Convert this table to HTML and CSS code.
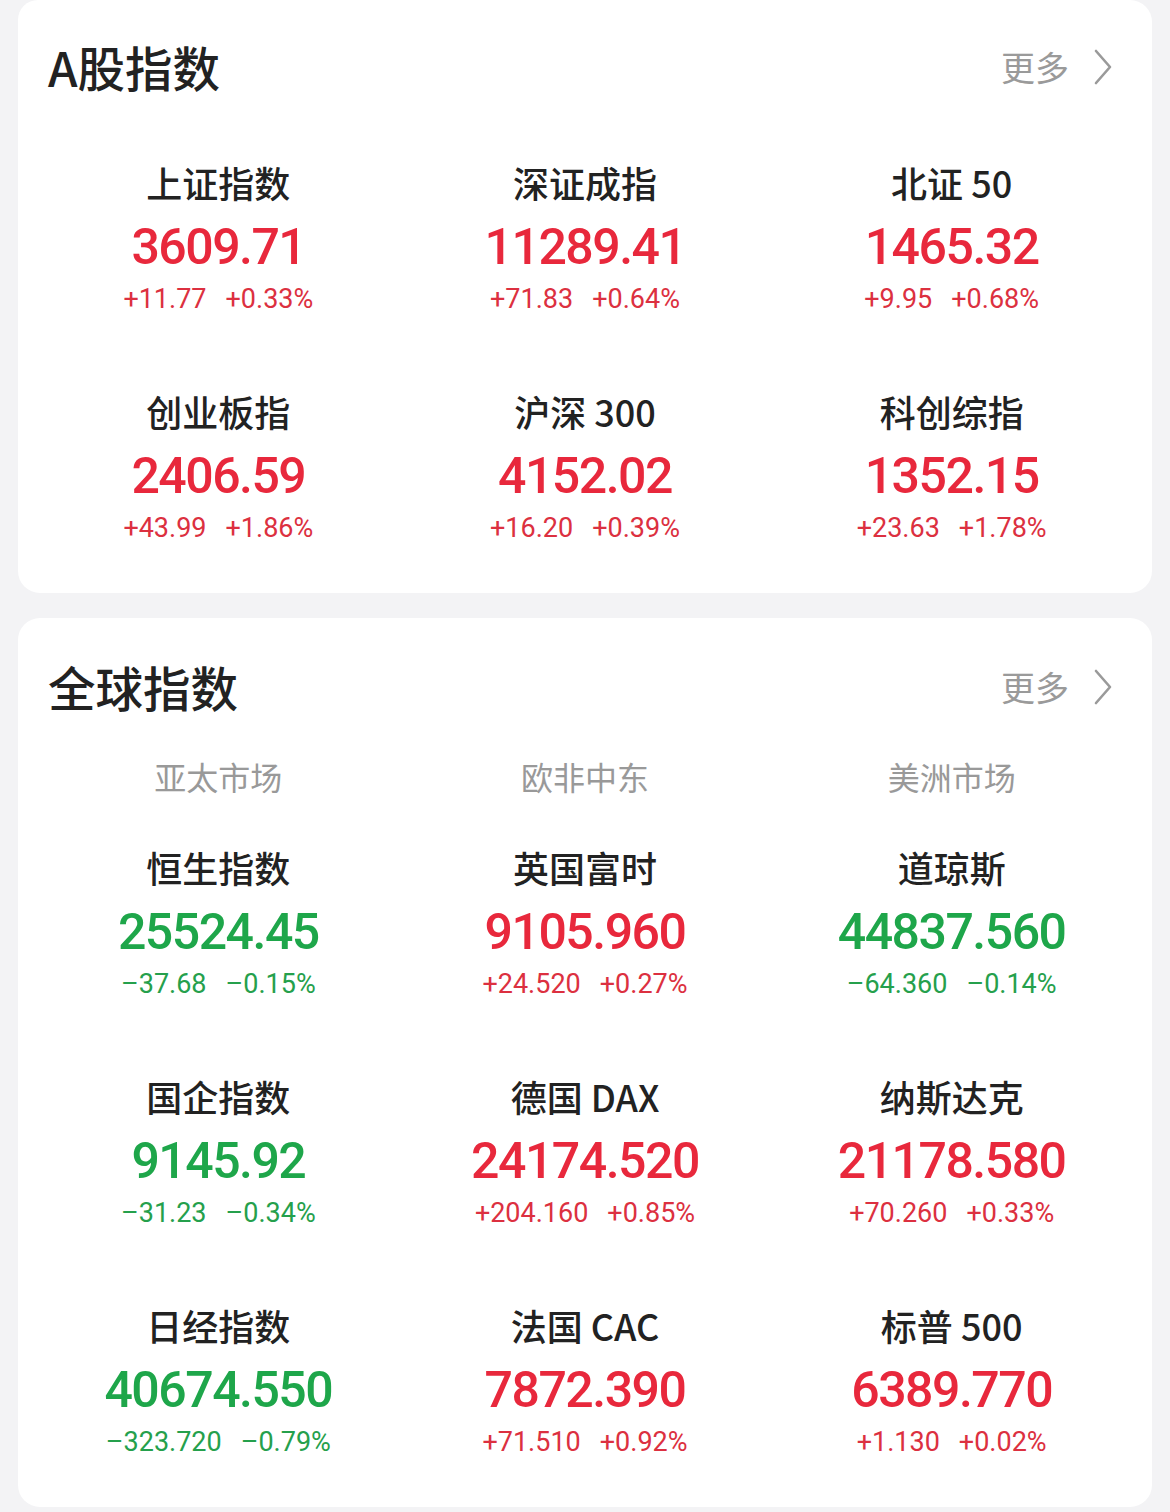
FILE: index.html
```html
<!DOCTYPE html>
<html lang="zh-CN">
<head>
<meta charset="utf-8">
<title>指数</title>
<link rel="stylesheet" href="styles.css">
</head>
<body>
<div class="page">
  <section class="card card-a">
    <header class="card-head">
      <h2 class="title">A股指数</h2>
      <a class="more">更多<svg class="chev" viewBox="0 0 20 36" width="20" height="36"><path d="M3 2 L17 18 L3 34" fill="none" stroke="#9a9a9a" stroke-width="2.6" stroke-linecap="round" stroke-linejoin="round"/></svg></a>
    </header>
    <div class="grid">
      <div class="cell"><div class="name">上证指数</div><div class="val up">3609.71</div><div class="chg up"><span>+11.77</span><span>+0.33%</span></div></div>
      <div class="cell"><div class="name">深证成指</div><div class="val up">11289.41</div><div class="chg up"><span>+71.83</span><span>+0.64%</span></div></div>
      <div class="cell"><div class="name">北证 50</div><div class="val up">1465.32</div><div class="chg up"><span>+9.95</span><span>+0.68%</span></div></div>
      <div class="cell"><div class="name">创业板指</div><div class="val up">2406.59</div><div class="chg up"><span>+43.99</span><span>+1.86%</span></div></div>
      <div class="cell"><div class="name">沪深 300</div><div class="val up">4152.02</div><div class="chg up"><span>+16.20</span><span>+0.39%</span></div></div>
      <div class="cell"><div class="name">科创综指</div><div class="val up">1352.15</div><div class="chg up"><span>+23.63</span><span>+1.78%</span></div></div>
    </div>
  </section>

  <section class="card card-g">
    <header class="card-head head-g">
      <h2 class="title">全球指数</h2>
      <a class="more">更多<svg class="chev" viewBox="0 0 20 36" width="20" height="36"><path d="M3 2 L17 18 L3 34" fill="none" stroke="#9a9a9a" stroke-width="2.6" stroke-linecap="round" stroke-linejoin="round"/></svg></a>
    </header>
    <div class="grid subs">
      <div class="sub">亚太市场</div>
      <div class="sub">欧非中东</div>
      <div class="sub">美洲市场</div>
    </div>
    <div class="grid">
      <div class="cell"><div class="name">恒生指数</div><div class="val down">25524.45</div><div class="chg down"><span>–37.68</span><span>–0.15%</span></div></div>
      <div class="cell"><div class="name">英国富时</div><div class="val up">9105.960</div><div class="chg up"><span>+24.520</span><span>+0.27%</span></div></div>
      <div class="cell"><div class="name">道琼斯</div><div class="val down">44837.560</div><div class="chg down"><span>–64.360</span><span>–0.14%</span></div></div>
      <div class="cell"><div class="name">国企指数</div><div class="val down">9145.92</div><div class="chg down"><span>–31.23</span><span>–0.34%</span></div></div>
      <div class="cell"><div class="name">德国 DAX</div><div class="val up">24174.520</div><div class="chg up"><span>+204.160</span><span>+0.85%</span></div></div>
      <div class="cell"><div class="name">纳斯达克</div><div class="val up">21178.580</div><div class="chg up"><span>+70.260</span><span>+0.33%</span></div></div>
      <div class="cell cell-last"><div class="name">日经指数</div><div class="val down">40674.550</div><div class="chg down"><span>–323.720</span><span>–0.79%</span></div></div>
      <div class="cell cell-last"><div class="name">法国 CAC</div><div class="val up">7872.390</div><div class="chg up"><span>+71.510</span><span>+0.92%</span></div></div>
      <div class="cell cell-last"><div class="name">标普 500</div><div class="val up">6389.770</div><div class="chg up"><span>+1.130</span><span>+0.02%</span></div></div>
    </div>
  </section>
</div>
</body>
</html>
```

FILE: styles.css
```css
* { box-sizing: border-box; margin: 0; padding: 0; }
html, body { background: #f3f3f5; }
body {
  width: 1170px;
  height: 1512px;
  overflow: hidden;
  font-family: "Noto Sans CJK SC", "Noto Sans", sans-serif;
  color: #222;
}
.page {
  padding: 0 18px;
  display: flex;
  flex-direction: column;
  gap: 25px;
}
.card {
  background: #fff;
  border-radius: 22px;
  padding: 0 17px;
}
.card-a { height: 593px; border-top-left-radius: 20px; }
.card-g { height: 889px; }
.card-head {
  height: 134px;
  display: flex;
  align-items: center;
  justify-content: space-between;
  padding-left: 13px;
  padding-right: 22px;
}
.head-g { height: 138px; }
.title {
  font-size: 47.5px;
  font-weight: 500;
  line-height: 60px;
  color: #222;
}
.more {
  display: flex;
  align-items: center;
  font-size: 34px;
  color: #9a9a9a;
  line-height: 44px;
  gap: 24px;
}
.chev { display: block; }
.grid {
  display: grid;
  grid-template-columns: repeat(3, 1fr);
}
.subs { height: 63px; align-items: start; }
.sub {
  text-align: center;
  font-size: 32px;
  line-height: 40px;
  color: #999;
}
.cell {
  height: 229px;
  padding-top: 26px;
  display: flex;
  flex-direction: column;
  align-items: center;
}
.cell-last { height: 230px; }
.name {
  font-size: 36px;
  font-weight: 500;
  line-height: 44px;
  color: #222;
  white-space: nowrap;
}
.val {
  margin-top: 13px;
  font-family: Roboto, "Liberation Sans", sans-serif;
  font-size: 50px;
  font-weight: 500;
  line-height: 60px;
  letter-spacing: -1.5px;
  white-space: nowrap;
}
.chg {
  margin-top: 5px;
  font-family: Roboto, "Liberation Sans", sans-serif;
  font-size: 27px;
  line-height: 34px;
  display: flex;
  gap: 19px;
  white-space: nowrap;
}
.val.up { color: #e8283c; }
.val.down { color: #1ea64a; }
.chg.up { color: #dc3040; }
.chg.down { color: #25a04c; }
```
